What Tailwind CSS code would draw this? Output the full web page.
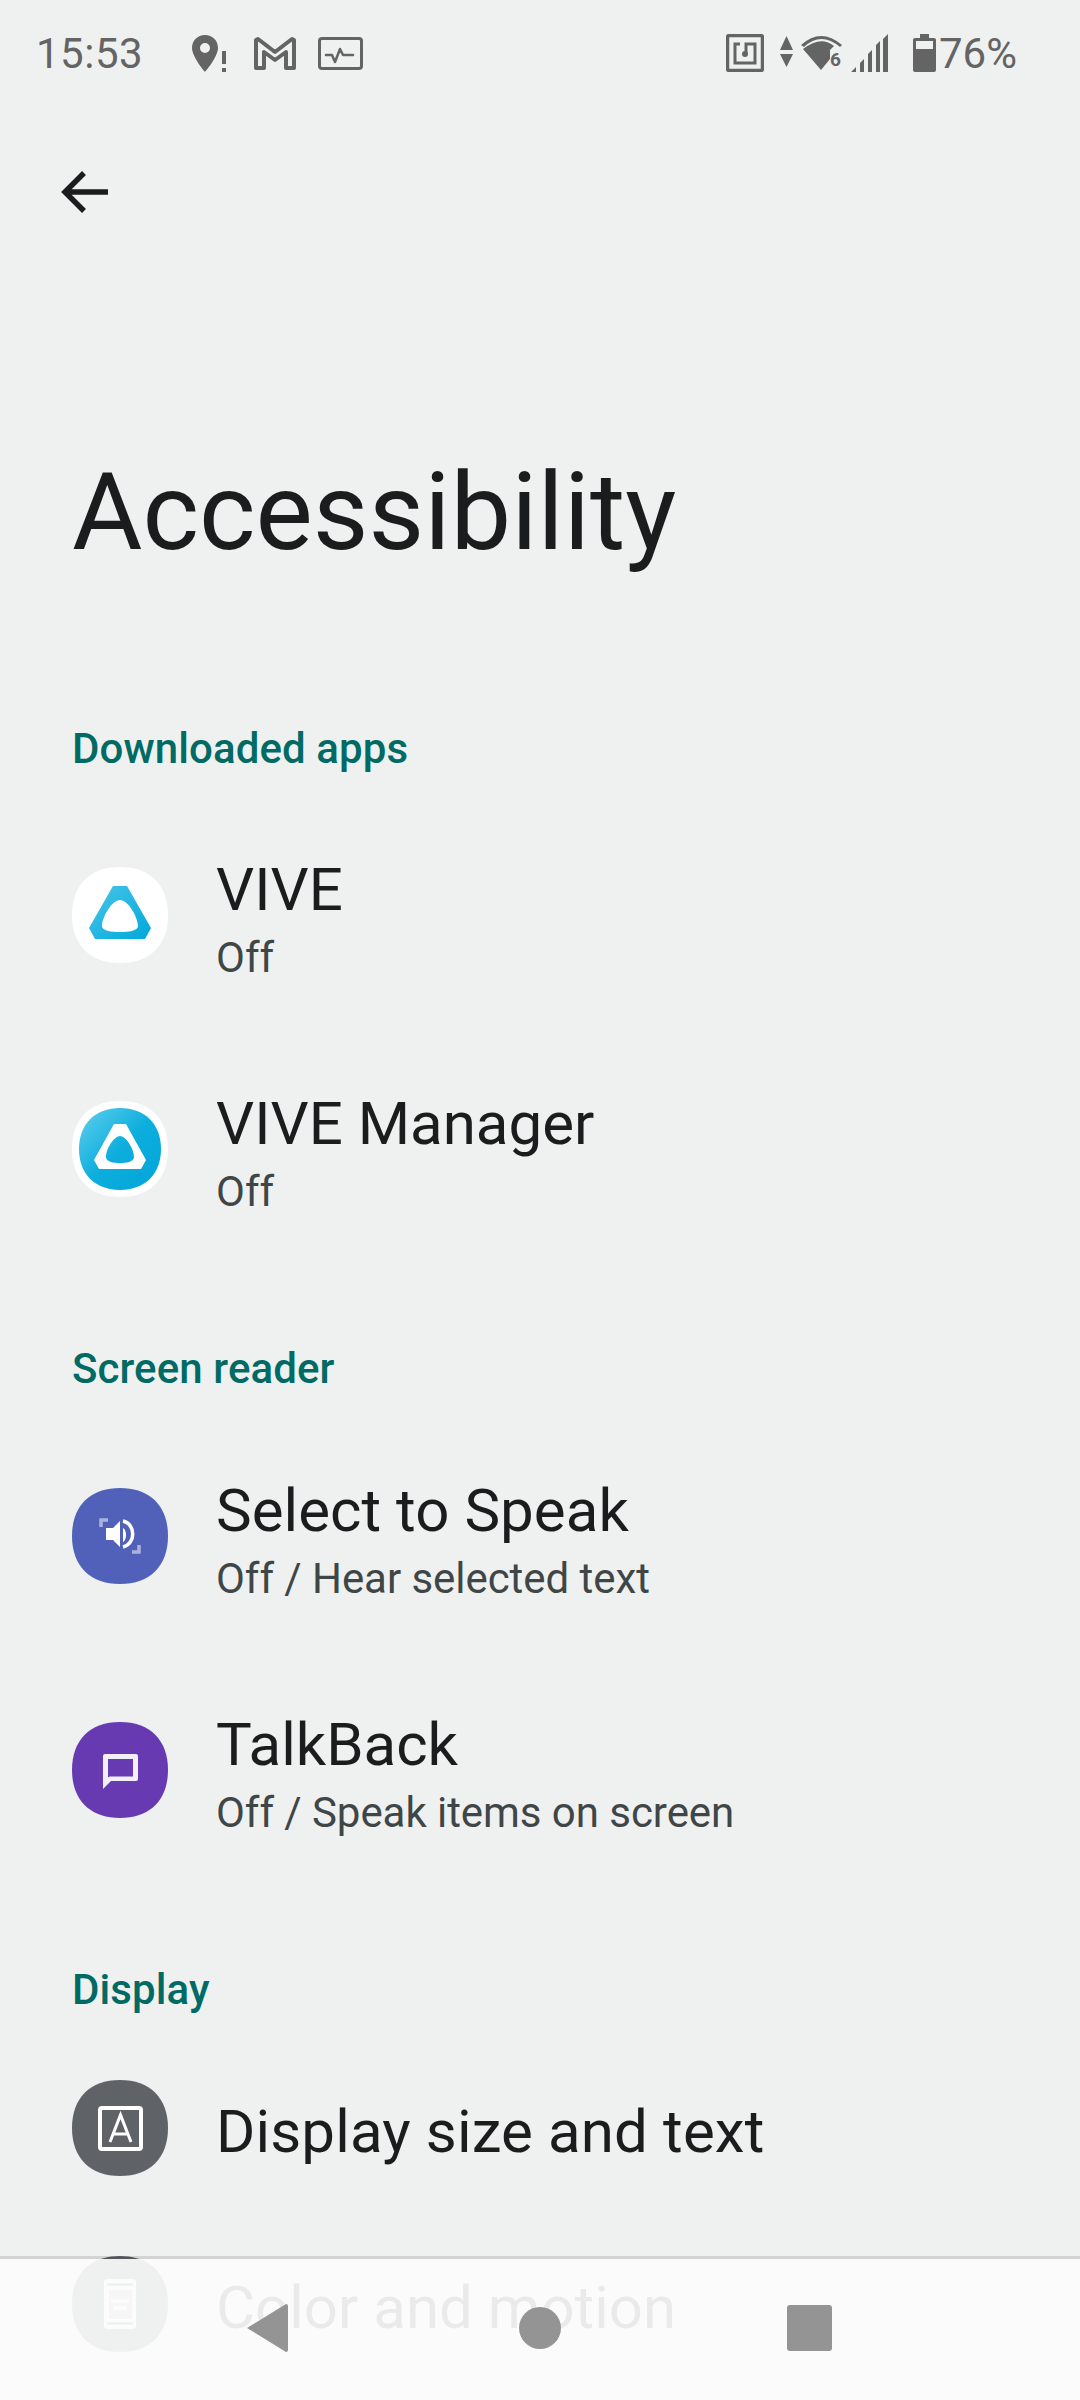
<!DOCTYPE html>
<html>
<head>
<meta charset="utf-8">
<script src="https://cdn.jsdelivr.net/npm/@tailwindcss/browser@4"></script>
</head>
<body class="m-0">
<div class="relative w-[1080px] h-[2400px] overflow-hidden bg-[#eff1f0] font-['Roboto',sans-serif] text-[#1a1d1e]">

  <!-- status bar -->
  <div class="flex items-center h-[106px] mb-[2px] pl-[36px] pr-[63px] text-[#646464]">
    <span class="text-[42px] leading-none tracking-[0.5px] w-[156px] mt-[2px]">15:53</span>
    <svg class="w-[34px] h-[37px]" viewBox="0 0 34 37"><path fill="#646464" fill-rule="evenodd" d="M13 0C5.500 0 0 5.500 0 13c0 9 13 24 13 24s13-15 13-24C26 5.500 20.500 0 13 0zm0 8a5 5 0 1 1 0 10 5 5 0 0 1 0-10z"/><rect x="30" y="16" width="4" height="13" fill="#646464"/><rect x="30" y="33" width="4" height="4" fill="#646464"/></svg>
    <svg class="w-[42px] h-[33px] ml-[28px]" viewBox="0 0 42 33"><path fill="none" stroke="#646464" stroke-width="4" stroke-linejoin="round" d="M2 3l2-1 17 13L38 2l2 1v28h-8V15L21 23 10 15v16H2z"/></svg>
    <svg class="w-[45px] h-[33px] ml-[22px]" viewBox="0 0 45 33"><rect x="1.500" y="1.500" width="42" height="30" rx="2.500" fill="none" stroke="#646464" stroke-width="3"/><path fill="none" stroke="#646464" stroke-width="2.500" stroke-linecap="round" stroke-linejoin="round" d="M8 18h6l3 7 5-13 3 6h10"/></svg>
    <div class="flex-1"></div>
    <svg class="w-[38px] h-[38px]" viewBox="0 0 38 38"><rect x="1.500" y="1.500" width="35" height="35" rx="2" fill="none" stroke="#646464" stroke-width="3.500"/><path fill="none" stroke="#646464" stroke-width="3" d="M14 10H9v19h20V10h-9v9"/><circle cx="19" cy="20" r="3" fill="#646464"/></svg>
    <svg class="w-[13px] h-[31px] ml-[16px] mb-[4px]" viewBox="0 0 13 31"><path fill="#646464" d="M6.500 0L13 14H0zM0 18h13L6.500 31z"/></svg>
    <div class="relative w-[42px] h-[34px] ml-[8px]">
      <svg class="w-[42px] h-[34px]" viewBox="0 0 42 34"><path fill="#646464" d="M0 9Q20-9 41 9l-2 2Q20-5 3 11zM2 13Q20-1 33 10l-4 4v9l-9 11z"/></svg>
      <span class="absolute left-[29px] top-[14px] text-[19px] font-bold leading-none text-[#646464]">6</span>
    </div>
    <svg class="w-[37px] h-[38px] ml-[8px]" viewBox="0 0 37 38"><path fill="#646464" d="M0 38l5-5v5zM9 38V29l4-4v13zM17 38V20l4-4v22zM25 38V11l4-4v31zM32 38V5l5-5v38z"/></svg>
    <svg class="w-[23px] h-[38px] ml-[25px]" viewBox="0 0 23 38"><path fill="#646464" fill-rule="evenodd" d="M7 0h9v4h5a2 2 0 0 1 2 2v30a2 2 0 0 1-2 2H2a2 2 0 0 1-2-2V6a2 2 0 0 1 2-2h5zM3 7v8h17V7z"/></svg>
    <span class="text-[42px] leading-none ml-[3px] mt-[2px]">76%</span>
  </div>

  <!-- back -->
  <div class="h-[156px] pl-[60px] pt-[60px]">
    <svg class="w-[48px] h-[48px]" viewBox="0 0 48 48"><path fill="none" stroke="#1a1d1e" stroke-width="5.500" d="M48 24H4M24 5L5 24l19 19"/></svg>
  </div>

  <!-- title -->
  <h1 class="pl-[72px] mt-[185px] h-[126px] text-[108px] leading-[126px] font-normal">Accessibility</h1>

  <section class="mt-[144px]">
    <h2 class="pl-[72px] h-[60px] text-[42px] leading-[60px] font-medium tracking-[0.1px] text-[#006a64]">Downloaded apps</h2>
    <div class="mt-[19px]">
      <a class="flex items-center h-[234px] pl-[72px]">
        <svg class="w-[96px] h-[96px] shrink-0" viewBox="0 0 96 96"><defs><linearGradient id="g1" x1="0" y1="0" x2="1" y2="1"><stop offset="0" stop-color="#48c6ea"/><stop offset="1" stop-color="#00a8da"/></linearGradient></defs><path fill="#fff" d="M48 0C78 0 96 18 96 48S78 96 48 96 0 78 0 48 18 0 48 0z"/><path fill="url(#g1)" fill-rule="evenodd" d="M41 19h14l24 42-6 11H23l-6-11zM48 33c-8 0-18 17-18 26 0 5 10 6 18 6s18-1 18-6c0-9-10-26-18-26z"/></svg>
        <div class="ml-[48px] pt-[8px]">
          <div class="text-[60px] leading-[70px]">VIVE</div>
          <div class="text-[42px] leading-[50px] text-[#3f4647] mt-[8px]">Off</div>
        </div>
      </a>
      <a class="flex items-center h-[234px] pl-[72px]">
        <svg class="w-[96px] h-[96px] shrink-0" viewBox="0 0 96 96"><defs><linearGradient id="g2" x1="0" y1="0" x2="1" y2="1"><stop offset="0" stop-color="#62d0ee"/><stop offset=".5" stop-color="#0daedd"/><stop offset="1" stop-color="#00a4d8"/></linearGradient></defs><path fill="#fff" d="M48 0C78 0 96 18 96 48S78 96 48 96 0 78 0 48 18 0 48 0z"/><path fill="url(#g2)" d="M48 7C73 7 89 23 89 48S73 89 48 89 7 73 7 48 23 7 48 7z"/><path fill="#fff" fill-rule="evenodd" d="M42 23h12l20 36-5 9H27l-5-9zM48 35c-6 0-14 13-14 21 0 5 8 6 14 6s14-1 14-6c0-8-8-21-14-21z"/></svg>
        <div class="ml-[48px] pt-[8px]">
          <div class="text-[60px] leading-[70px]">VIVE Manager</div>
          <div class="text-[42px] leading-[50px] text-[#3f4647] mt-[8px]">Off</div>
        </div>
      </a>
    </div>
  </section>

  <section class="mt-[73px]">
    <h2 class="pl-[72px] h-[60px] text-[42px] leading-[60px] font-medium tracking-[0.1px] text-[#006a64]">Screen reader</h2>
    <div class="mt-[20px]">
      <a class="flex items-center h-[234px] pl-[72px]">
        <svg class="w-[96px] h-[96px] shrink-0" viewBox="0 0 96 96"><path fill="#5161b9" d="M48 0C78 0 96 18 96 48S78 96 48 96 0 78 0 48 18 0 48 0z"/><path fill="none" stroke="#aab2dd" stroke-width="3.500" d="M29 39v-7h7M67 57v7h-7"/><path fill="#fff" d="M34 40h7l7-7v26l-7-7h-7z"/><path fill="none" stroke="#fff" stroke-width="3.500" d="M51 33c13 3 13 23 0 26"/><path fill="#fff" d="M51 40c4 2 4 12 0 14z"/></svg>
        <div class="ml-[48px] pt-[8px]">
          <div class="text-[60px] leading-[70px] tracking-[0.05px]">Select to Speak</div>
          <div class="text-[42px] leading-[50px] text-[#3f4647] mt-[8px] tracking-[-0.05px]">Off / Hear selected text</div>
        </div>
      </a>
      <a class="flex items-center h-[234px] pl-[72px]">
        <svg class="w-[96px] h-[96px] shrink-0" viewBox="0 0 96 96"><path fill="#673ab2" d="M48 0C78 0 96 18 96 48S78 96 48 96 0 78 0 48 18 0 48 0z"/><path fill="#f3eff8" fill-rule="evenodd" d="M33 32h31a2 2 0 0 1 2 2v23a2 2 0 0 1-2 2H39l-8 8V34a2 2 0 0 1 2-2zM36 37v18.500L37.500 54.500H61V37z"/></svg>
        <div class="ml-[48px] pt-[8px]">
          <div class="text-[60px] leading-[70px]">TalkBack</div>
          <div class="text-[42px] leading-[50px] text-[#3f4647] mt-[8px] tracking-[-0.05px]">Off / Speak items on screen</div>
        </div>
      </a>
    </div>
  </section>

  <section class="mt-[73px]">
    <h2 class="pl-[72px] h-[60px] text-[42px] leading-[60px] font-medium tracking-[0.1px] text-[#006a64]">Display</h2>
    <a class="flex items-center h-[176px] pl-[72px] mt-[20px]">
      <svg class="w-[96px] h-[96px] shrink-0" viewBox="0 0 96 96"><path fill="#5f6368" d="M48 0C78 0 96 18 96 48S78 96 48 96 0 78 0 48 18 0 48 0z"/><rect x="28" y="28" width="41" height="41" rx="2" fill="none" stroke="#fff" stroke-width="4"/><path fill="none" stroke="#fff" stroke-width="3" d="M38 62l10.500-27L59 62M41.500 54h14"/></svg>
      <div class="ml-[48px] mt-[8px] text-[60px] leading-[70px] tracking-[0.14px]">Display size and text</div>
    </a>
    <a class="flex items-center h-[176px] pl-[72px]">
      <svg class="w-[96px] h-[96px] shrink-0" viewBox="0 0 96 96"><path fill="#5f6368" d="M48 0C78 0 96 18 96 48S78 96 48 96 0 78 0 48 18 0 48 0z"/><rect x="32" y="23" width="32" height="50" rx="3" fill="#fff"/><path stroke="#5f6368" stroke-width="2.500" d="M35 28.500h26M35 67.500h26"/><rect x="37" y="34" width="23" height="29" fill="#5f6368" fill-opacity=".5"/><path stroke="#fff" stroke-width="3.500" d="M39 45h18M41 52h14"/></svg>
      <div class="ml-[48px] mt-[8px] text-[60px] leading-[70px]">Color and motion</div>
    </a>
  </section>

  <!-- nav bar overlay -->
  <div class="absolute left-0 right-0 bottom-0 h-[144px] bg-[#fcfcfc]/92 bg-clip-padding border-t-[3px] border-black/12">
    <svg class="absolute left-[246px] top-[45px] w-[42px] h-[48px]" viewBox="0 0 42 48"><path fill="#949494" d="M40 0a2 2 0 0 1 2 2v44a2 2 0 0 1-2 2L1 24z"/></svg>
    <div class="absolute left-[519px] top-[48px] w-[42px] h-[42px] rounded-full bg-[#949494]"></div>
    <div class="absolute left-[787px] top-[46px] w-[45px] h-[46px] rounded-[3px] bg-[#949494]"></div>
  </div>
</div>
</body>
</html>
